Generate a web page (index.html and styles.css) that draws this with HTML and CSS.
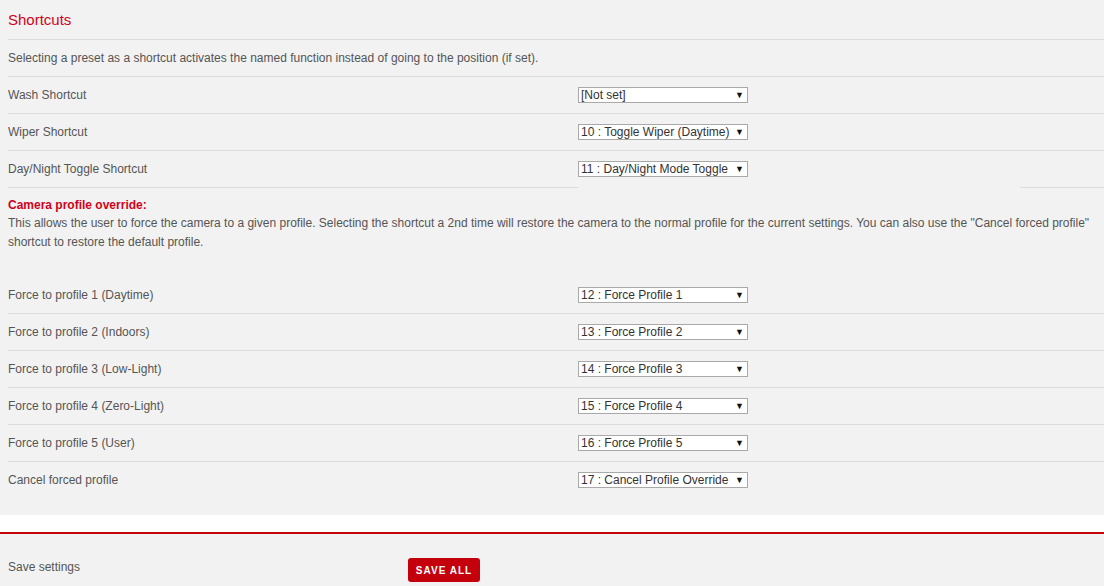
FILE: index.html
```html
<!DOCTYPE html>
<html>
<head>
<meta charset="utf-8">
<link rel="stylesheet" href="styles.css">
</head>
<body>
<div class="panel">
  <h2 class="title">Shortcuts</h2>
  <div class="row desc">Selecting a preset as a shortcut activates the named function instead of going to the position (if set).</div>
  <div class="row">
    <div class="label">Wash Shortcut</div>
    <div class="ctl"><span class="sel"><select><option>[Not set]</option></select></span></div>
    <div class="spare"></div>
  </div>
  <div class="row">
    <div class="label">Wiper Shortcut</div>
    <div class="ctl"><span class="sel"><select><option>10 : Toggle Wiper (Daytime)</option></select></span></div>
    <div class="spare"></div>
  </div>
  <div class="row last">
    <div class="label">Day/Night Toggle Shortcut</div>
    <div class="ctl"><span class="sel"><select><option>11 : Day/Night Mode Toggle</option></select></span></div>
    <div class="spare"></div>
  </div>

  <div class="note">
    <div class="note-title">Camera profile override:</div>
    <p class="note-text">This allows the user to force the camera to a given profile. Selecting the shortcut a 2nd time will restore the camera to the normal profile for the current settings. You can also use the "Cancel forced profile" shortcut to restore the default profile.</p>
  </div>

  <div class="rows2">
    <div class="row">
      <div class="label">Force to profile 1 (Daytime)</div>
      <div class="ctl"><span class="sel"><select><option>12 : Force Profile 1</option></select></span></div>
      <div class="spare"></div>
    </div>
    <div class="row">
      <div class="label">Force to profile 2 (Indoors)</div>
      <div class="ctl"><span class="sel"><select><option>13 : Force Profile 2</option></select></span></div>
      <div class="spare"></div>
    </div>
    <div class="row">
      <div class="label">Force to profile 3 (Low-Light)</div>
      <div class="ctl"><span class="sel"><select><option>14 : Force Profile 3</option></select></span></div>
      <div class="spare"></div>
    </div>
    <div class="row">
      <div class="label">Force to profile 4 (Zero-Light)</div>
      <div class="ctl"><span class="sel"><select><option>15 : Force Profile 4</option></select></span></div>
      <div class="spare"></div>
    </div>
    <div class="row">
      <div class="label">Force to profile 5 (User)</div>
      <div class="ctl"><span class="sel"><select><option>16 : Force Profile 5</option></select></span></div>
      <div class="spare"></div>
    </div>
    <div class="row end">
      <div class="label">Cancel forced profile</div>
      <div class="ctl"><span class="sel"><select><option>17 : Cancel Profile Override</option></select></span></div>
      <div class="spare"></div>
    </div>
  </div>
</div>
<div class="band"></div>
<div class="footer">
  <div class="foot-label">Save settings</div>
  <button class="save">SAVE ALL</button>
</div>
</body>
</html>
```
FILE: styles.css
```css
html, body {
  margin: 0;
  padding: 0;
  background: #f2f2f2;
  font-family: "Liberation Sans", Arial, sans-serif;
  font-size: 12px;
  color: #555;
}
.panel {
  padding: 0 0 16px 8px;
}
.title {
  margin: 0;
  height: 39px;
  border-bottom: 1px solid #dcdcdc;
  font-size: 15px;
  font-weight: normal;
  color: #d0021b;
  display: flex;
  align-items: center;
}
.row {
  display: grid;
  grid-template-columns: 570px 442px 1fr;
  height: 37px;
}
.row > div {
  display: flex;
  align-items: center;
  border-bottom: 1px solid #dcdcdc;
}
.row.desc {
  display: flex;
  align-items: center;
  height: 36px;
  border-bottom: 1px solid #dcdcdc;
}
.row.last > .ctl {
  border-bottom-color: transparent;
}
.row.end > div {
  border-bottom-color: transparent;
}
.sel {
  position: relative;
  display: inline-block;
}
.sel select {
  -webkit-appearance: none;
  appearance: none;
  width: 170px;
  height: 16px;
  margin: 0;
  padding: 0 0 0 2px;
  border: 1px solid #a9a9a9;
  border-radius: 0;
  background: #fff;
  font-family: "Liberation Sans", Arial, sans-serif;
  font-size: 12px;
  color: #333;
  line-height: 14px;
}
.sel::after {
  content: "\25BC";
  position: absolute;
  right: 4px;
  top: 2px;
  font-size: 9px;
  line-height: 12px;
  color: #111;
  pointer-events: none;
}
.note {
  padding-top: 8px;
  padding-right: 10px;
}
.note-title {
  color: #d0021b;
  font-weight: bold;
  line-height: 18px;
}
.note-text {
  margin: 0;
  line-height: 19px;
}
.rows2 {
  margin-top: 25px;
}
.band {
  height: 17px;
  background: #fff;
  border-bottom: 2px solid #c4000c;
}
.footer {
  display: flex;
  align-items: flex-start;
  padding: 24px 0 0 8px;
}
.foot-label {
  width: 400px;
  line-height: 18px;
}
.save {
  width: 72px;
  height: 24px;
  border: none;
  border-radius: 3px;
  background: #c4000c;
  color: #fff;
  font-family: "Liberation Sans", Arial, sans-serif;
  font-size: 10px;
  font-weight: bold;
  letter-spacing: 1px;
  padding: 0;
}
```
